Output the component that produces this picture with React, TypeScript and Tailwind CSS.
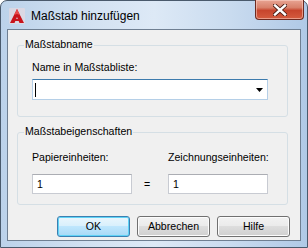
import React from "react";

const ui = { fontFamily: '"Liberation Sans", Arial, sans-serif' };

function GroupBox({ title, className, children }: { title: string; className: string; children: React.ReactNode }) {
  return (
    <div className={`relative ml-[9px] w-[271px] rounded-[3px] border border-[#d5dfe5] ${className}`}>
      <span className="absolute -top-[8px] left-[6px] bg-[#f0f0f0] px-[1px] text-[10.6px] leading-[13px] text-black">
        {title}
      </span>
      {children}
    </div>
  );
}

function Button({ label, primary }: { label: string; primary?: boolean }) {
  return (
    <div
      className={`flex h-[21px] w-[73px] items-center justify-center rounded-[3px] border text-[10.6px] leading-[13px] text-black ${
        primary ? "border-[#3c7fb1] shadow-[inset_0_0_0_1px_#5fd3f6]" : "border-[#707070] shadow-[inset_0_0_0_1px_#fcfcfc]"
      }`}
      style={{
        background: primary
          ? "linear-gradient(#eaf6fd 0%, #d9f0fc 45%, #bee6fd 50%, #a7d9f5 100%)"
          : "linear-gradient(#f2f2f2 0%, #ebebeb 45%, #dddddd 50%, #cfcfcf 100%)",
      }}
    >
      {label}
    </div>
  );
}

function TextBox({ value }: { value: string }) {
  return (
    <div className="flex h-[20px] w-[100px] items-center border border-[#c8cbd2] border-t-[#abadb3] bg-white pl-[4px] text-[10.6px] leading-[13px] text-black">
      {value}
    </div>
  );
}

export default function App() {
  return (
    <div className="h-[248px] w-[308px] bg-white" style={ui}>
      <div
        className="flex h-[248px] w-[308px] flex-col rounded-t-[7px] border border-[#4a5a6c] px-[6px] pb-[6px]"
        style={{
          background:
            "linear-gradient(to right, #bcd2ea 0%, #d3e2f2 30%, #dde9f6 50%, #c9dbef 75%, #b0c9e6 100%)",
        }}
      >
        {/* Title bar */}
        <div className="relative flex h-[28px] items-center">
          <svg width="16" height="16" viewBox="0 0 16 16" className="ml-[2px] mt-[2px]">
            <rect x="0" y="0" width="16" height="16" rx="1" fill="#f4dcdc" opacity="0.5" />
            <polygon points="8,1 15,15 10.5,15 8,9 5.5,15 1,15" fill="#c8141c" />
            <polygon points="8,1 11,7 8,6 5,7" fill="#e84a4a" />
            <rect x="3" y="11" width="10" height="2" fill="#c8141c" />
          </svg>
          <span className="ml-[6px] mt-[2px] text-[12px] leading-[14px] text-black">Maßstab hinzufügen</span>
          <div
            className="absolute right-[-3px] top-[-1px] flex h-[20px] w-[49px] items-center justify-center rounded-b-[4px] border border-t-0 border-[#6d2a20]"
            style={{
              background: "linear-gradient(#e8a493 0%, #d8806a 40%, #c7452d 55%, #d45c3f 100%)",
              boxShadow: "inset 0 0 0 1px rgba(255,220,210,0.5)",
            }}
          >
            <svg width="14" height="12" viewBox="0 0 14 12">
              <path d="M2 1.5 L12 10.5 M12 1.5 L2 10.5" stroke="#4a1c14" strokeWidth="4.2" strokeLinecap="square" />
              <path d="M2 1.5 L12 10.5 M12 1.5 L2 10.5" stroke="#ffffff" strokeWidth="2.4" strokeLinecap="square" />
            </svg>
          </div>
        </div>

        {/* Client area */}
        <div className="flex h-[212px] flex-col border border-[#6f7f92] bg-[#f0f0f0] pt-[15px]">
          <GroupBox title="Maßstabname" className="h-[72px] pl-[14px] pt-[15px]">
            <div className="text-[10.6px] leading-[13px] text-black">Name in Maßstabliste:</div>
            <div className="mt-[5px] flex h-[21px] w-[236px] items-center justify-between border border-[#b5cfe7] border-t-[#3d7bad] bg-white pl-[2px] pr-[4px]">
              <div className="h-[14px] w-[1px] bg-black" />
              <svg width="7" height="4" viewBox="0 0 7 4">
                <polygon points="0,0 7,0 3.5,4" fill="#000" />
              </svg>
            </div>
          </GroupBox>

          <GroupBox title="Maßstabeigenschaften" className="mt-[15px] h-[73px] pl-[14px] pt-[18px]">
            <div className="flex">
              <div className="flex w-[100px] flex-col">
                <div className="text-[10.6px] leading-[13px] text-black">Papiereinheiten:</div>
                <div className="mt-[10px]">
                  <TextBox value="1" />
                </div>
              </div>
              <div className="flex w-[36px] flex-col">
                <div className="h-[13px]" />
                <div className="mt-[10px] flex h-[20px] items-center pl-[12px] text-[10.6px] leading-[13px] text-black">=</div>
              </div>
              <div className="flex w-[100px] flex-col">
                <div className="text-[10.6px] leading-[13px] text-black">Zeichnungseinheiten:</div>
                <div className="mt-[10px]">
                  <TextBox value="1" />
                </div>
              </div>
            </div>
          </GroupBox>

          <div className="mt-[11px] flex justify-end gap-[7px] pr-[10px]">
            <Button label="OK" primary />
            <Button label="Abbrechen" />
            <Button label="Hilfe" />
          </div>
        </div>
      </div>
    </div>
  );
}
